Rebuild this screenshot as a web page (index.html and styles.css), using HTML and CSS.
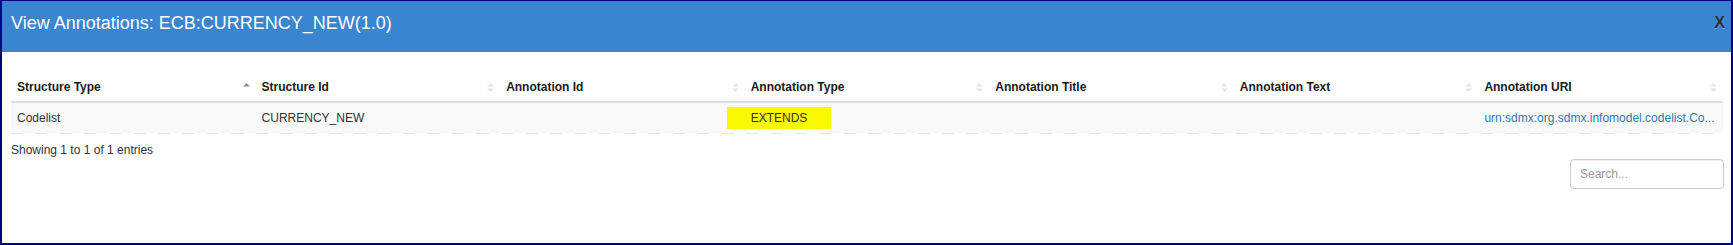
FILE: index.html
```html
<!DOCTYPE html>
<html>
<head>
<meta charset="utf-8">
<title>View Annotations</title>
<link rel="stylesheet" href="styles.css">
</head>
<body>
<div class="modal">
  <div class="modal-header">
    <h4 class="title">View Annotations: ECB:CURRENCY_NEW(1.0)</h4>
    <button class="close" type="button">X</button>
  </div>
  <div class="modal-body">
    <table class="grid">
      <thead>
        <tr>
          <th><div class="th-in"><span>Structure Type</span><svg class="sort asc" width="7" height="9" viewBox="0 0 7 9"><polygon class="up" points="0,3.5 3.5,0 7,3.5"/></svg></div></th>
          <th><div class="th-in"><span>Structure Id</span><svg class="sort" width="7" height="9" viewBox="0 0 7 9"><polygon class="up" points="0,3.5 3.5,0 7,3.5"/><polygon class="down" points="0,5.5 7,5.5 3.5,9"/></svg></div></th>
          <th><div class="th-in"><span>Annotation Id</span><svg class="sort" width="7" height="9" viewBox="0 0 7 9"><polygon class="up" points="0,3.5 3.5,0 7,3.5"/><polygon class="down" points="0,5.5 7,5.5 3.5,9"/></svg></div></th>
          <th><div class="th-in"><span>Annotation Type</span><svg class="sort" width="7" height="9" viewBox="0 0 7 9"><polygon class="up" points="0,3.5 3.5,0 7,3.5"/><polygon class="down" points="0,5.5 7,5.5 3.5,9"/></svg></div></th>
          <th><div class="th-in"><span>Annotation Title</span><svg class="sort" width="7" height="9" viewBox="0 0 7 9"><polygon class="up" points="0,3.5 3.5,0 7,3.5"/><polygon class="down" points="0,5.5 7,5.5 3.5,9"/></svg></div></th>
          <th><div class="th-in"><span>Annotation Text</span><svg class="sort" width="7" height="9" viewBox="0 0 7 9"><polygon class="up" points="0,3.5 3.5,0 7,3.5"/><polygon class="down" points="0,5.5 7,5.5 3.5,9"/></svg></div></th>
          <th><div class="th-in"><span>Annotation URI</span><svg class="sort" width="7" height="9" viewBox="0 0 7 9"><polygon class="up" points="0,3.5 3.5,0 7,3.5"/><polygon class="down" points="0,5.5 7,5.5 3.5,9"/></svg></div></th>
        </tr>
      </thead>
      <tbody>
        <tr>
          <td>Codelist</td>
          <td>CURRENCY_NEW</td>
          <td></td>
          <td><span class="hl">EXTENDS</span></td>
          <td></td>
          <td></td>
          <td><a class="uri" href="#">urn:sdmx:org.sdmx.infomodel.codelist.Co...</a></td>
        </tr>
      </tbody>
    </table>
    <div class="dash"></div>
    <div class="info">Showing 1 to 1 of 1 entries</div>
    <div class="filter"><input class="search" type="search" placeholder="Search..."></div>
  </div>
</div>
</body>
</html>
```
FILE: styles.css
```css
* { box-sizing: border-box; }
html, body { margin: 0; padding: 0; background: #fff; }
body { font-family: "Liberation Sans", Arial, sans-serif; font-size: 12px; color: #333; }

.modal {
  width: 1733px;
  height: 245px;
  border-style: solid;
  border-color: #000080;
  border-width: 1px 2px 2px 2px;
  background: #fff;
  overflow: hidden;
}

.modal-header {
  height: 51px;
  background: #3a85d0;
  display: flex;
  justify-content: space-between;
  align-items: flex-start;
  padding: 12px 6px 0 9px;
}
.title {
  margin: 0;
  font-size: 18px;
  font-weight: normal;
  color: #fff;
  line-height: 20.7px;
}
.close {
  margin: 2px 0 0 0;
  padding: 0;
  border: 0;
  background: transparent;
  font-family: "Liberation Sans", Arial, sans-serif;
  font-size: 16px;
  font-weight: bold;
  line-height: 16px;
  color: #22303f;
  text-shadow: 0 1px 0 rgba(255,255,255,.3);
  cursor: pointer;
}

.modal-body {
  padding: 21px 8px 0 9px;
}

.grid {
  width: 1712px;
  table-layout: fixed;
  border-collapse: collapse;
  border-spacing: 0;
}
.grid th {
  text-align: left;
  font-weight: bold;
  font-size: 12px;
  line-height: 14px;
  color: #1a1a1a;
  padding: 7px 6px;
  border-bottom: 2px solid #dddddd;
}
.th-in {
  display: flex;
  justify-content: space-between;
  align-items: center;
}
.sort { display: block; flex: none; }
.sort polygon { fill: #e4e4e4; }
.sort.asc .up { fill: #8c8c8c; }

.grid td {
  padding: 8px 6px;
  line-height: 14px;
  background: #f9f9f9;
  color: #333;
  white-space: nowrap;
}
.hl {
  background: #f8f800;
  padding: 4px 24px;
  margin: 0 -24px;
}
.uri {
  color: #337ab7;
  text-decoration: none;
}

.dash {
  width: 1712px;
  height: 1px;
  background: repeating-linear-gradient(90deg, #e6e6f2 0 12px, transparent 12px 24.5px);
}

.info {
  margin-top: 9px;
  line-height: 14px;
  color: #333;
}

.filter {
  display: flex;
  justify-content: flex-end;
  margin-top: 2px;
  margin-right: -1px;
}
.search {
  width: 154px;
  height: 30px;
  border: 1px solid #cccccc;
  border-radius: 4px;
  padding: 0 9px;
  font-family: "Liberation Sans", Arial, sans-serif;
  font-size: 12px;
  color: #555;
  box-shadow: inset 0 1px 1px rgba(0,0,0,.075);
  outline: none;
}
.search::placeholder { color: #999; }
```
